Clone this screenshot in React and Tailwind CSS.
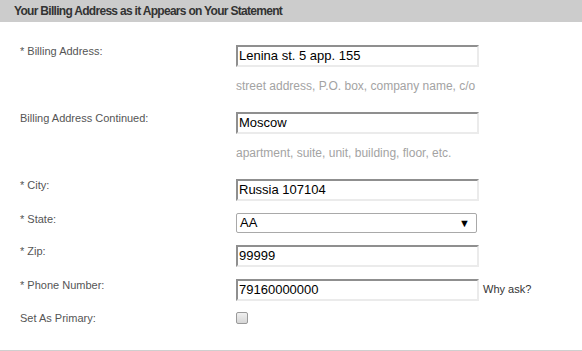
import React from 'react';

const font = { fontFamily: '"Liberation Sans", Arial, sans-serif' };

function Label({ children }) {
  return (
    <div className="w-[236px] shrink-0 pl-[20px] text-[11px] leading-[13px] text-[#555555]">
      {children}
    </div>
  );
}

function TextInput({ value }) {
  return (
    <div className="w-[243px] h-[22px] border-2 border-t-[#8f8f8f] border-l-[#8f8f8f] border-r-[#ebebeb] border-b-[#ebebeb] bg-white px-[1px] text-[13px] leading-[18px] text-black whitespace-nowrap overflow-hidden">
      {value}
    </div>
  );
}

function Hint({ children }) {
  return (
    <div className="mt-[11px] text-[12px] leading-[16px] text-[#a3a3a3] whitespace-nowrap">
      {children}
    </div>
  );
}

export default function App() {
  return (
    <div className="w-[582px] h-[351px] bg-white flex flex-col" style={font}>
      <div className="h-[22px] bg-[#cccccc] pl-[14px] text-[12px] leading-[22px] font-bold text-[#333333] tracking-[-0.7px]">
        Your Billing Address as it Appears on Your Statement
      </div>

      <div className="flex flex-col pt-[23px] flex-1">
        <div className="flex items-start">
          <Label>* Billing Address:</Label>
          <div className="flex flex-col">
            <TextInput value="Lenina st. 5 app. 155" />
            <Hint>street address, P.O. box, company name, c/o</Hint>
          </div>
        </div>

        <div className="flex items-start mt-[18px]">
          <Label>Billing Address Continued:</Label>
          <div className="flex flex-col">
            <TextInput value="Moscow" />
            <Hint>apartment, suite, unit, building, floor, etc.</Hint>
          </div>
        </div>

        <div className="flex items-start mt-[18px]">
          <Label>* City:</Label>
          <TextInput value="Russia 107104" />
        </div>

        <div className="flex items-start mt-[12px]">
          <Label>* State:</Label>
          <div className="w-[241px] h-[20px] border border-[#a9a9a9] rounded-[2px] bg-white flex items-center justify-between pl-[3px] pr-[6px] text-[13px] text-black">
            <span>AA</span>
            <span className="text-[11px] leading-none">▼</span>
          </div>
        </div>

        <div className="flex items-start mt-[12px]">
          <Label>* Zip:</Label>
          <TextInput value="99999" />
        </div>

        <div className="flex items-start mt-[12px]">
          <Label>* Phone Number:</Label>
          <TextInput value="79160000000" />
          <span className="ml-[4px] pt-[4px] text-[11px] leading-[13px] text-[#333333]">Why ask?</span>
        </div>

        <div className="flex items-start mt-[11px]">
          <Label>Set As Primary:</Label>
          <div className="w-[12px] h-[12px] rounded-[2px] border border-[#9a9a9a] bg-gradient-to-b from-[#f0f0f0] to-[#d6d6d6]" />
        </div>

        <div className="mt-auto h-[1px] bg-[#cfcfcf]" />
      </div>
    </div>
  );
}
